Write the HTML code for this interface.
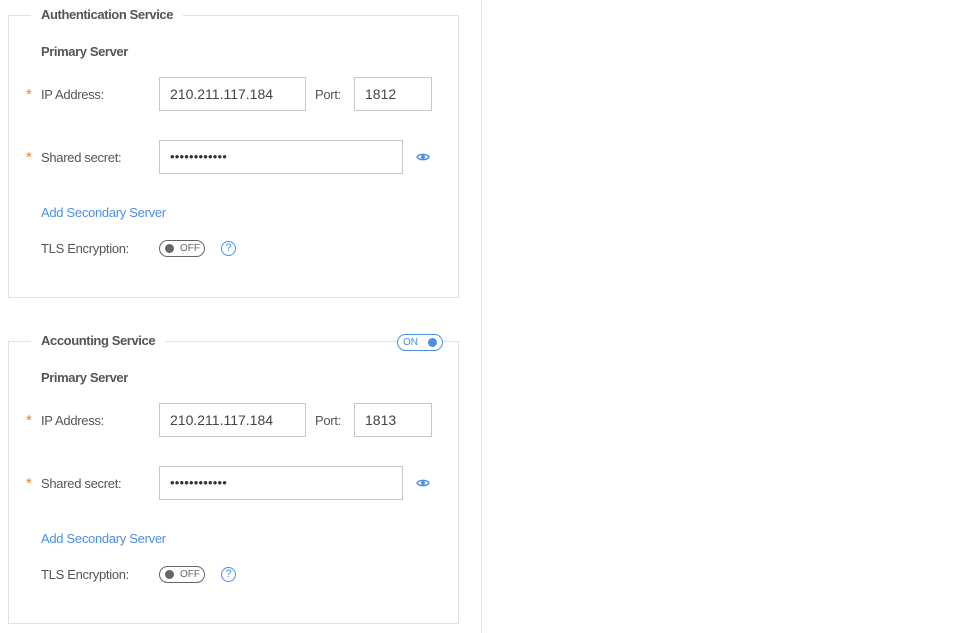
<!DOCTYPE html>
<html><head><meta charset="utf-8"><style>
*{margin:0;padding:0;box-sizing:border-box}
body{width:977px;height:633px;background:#fff;font-family:"Liberation Sans",sans-serif;position:relative;overflow:hidden;color:#555}
.vl{position:absolute;left:481px;top:0;width:1px;height:633px;background:#e4e4e4}
.sec{position:absolute;left:8px;width:451px;height:283px;border:1px solid #e2e2e2}
.t{position:absolute;background:#fff;padding:0 10px;font-size:13px;font-weight:bold;color:#555;left:22px;top:-9px;line-height:16px;letter-spacing:-0.4px}
.a{position:absolute;font-size:13px;line-height:16px;letter-spacing:-0.3px}
.b{font-weight:bold;letter-spacing:-0.4px}
.star{color:#e8822d;left:17px;font-size:15px}
.inp{position:absolute;border:1px solid #c8c8c8;height:34px;font-size:14px;color:#444;padding-left:10px;line-height:32px;background:#fff}
.pw{font-size:13px;letter-spacing:0.2px;color:#333}
.link{color:#4d8ee6}
.eye{position:absolute}
.tog{position:absolute;width:46px;height:17px;border:1.5px solid #666;border-radius:9px;font-size:10px;color:#666}
.tog i{position:absolute;left:5px;top:3px;width:9px;height:9px;border-radius:50%;background:#666}
.tog span{position:absolute;left:20px;top:1px;line-height:13px}
.q{position:absolute;width:15px;height:15px;border:1.5px solid #4d8ee6;border-radius:50%;color:#4d8ee6;font-size:11px;text-align:center;line-height:12px}
.on{position:absolute;left:388px;top:-8px;width:46px;height:17px;border:1.5px solid #4d8ee6;border-radius:9px;background:#fff;font-size:10px;color:#4d8ee6}
.on span{position:absolute;left:5px;top:1px;line-height:13px}
.on i{position:absolute;right:5px;top:3px;width:9px;height:9px;border-radius:50%;background:#4d8ee6}
</style></head><body>
<div class="vl"></div>

<div class="sec" style="top:15px">
<div class="t">Authentication Service</div>
<div class="a b" style="left:32px;top:28px">Primary Server</div>
<div class="a star" style="top:71px">*</div>
<div class="a" style="left:32px;top:71px">IP Address:</div>
<div class="inp" style="left:150px;top:61px;width:147px">210.211.117.184</div>
<div class="a" style="left:306px;top:71px">Port:</div>
<div class="inp" style="left:345px;top:61px;width:78px">1812</div>
<div class="a star" style="top:134px">*</div>
<div class="a" style="left:32px;top:134px">Shared secret:</div>
<div class="inp pw" style="left:150px;top:124px;width:244px">••••••••••••</div>
<svg class="eye" style="left:407px;top:136px" width="14" height="10" viewBox="0 0 14 10"><path d="M1 5C3 1.5 11 1.5 13 5C11 8.5 3 8.5 1 5Z" fill="none" stroke="#4d8ee6" stroke-width="1.5"/><circle cx="7" cy="5" r="2" fill="#4d8ee6"/></svg>
<div class="a link" style="left:32px;top:189px">Add Secondary Server</div>
<div class="a" style="left:32px;top:225px">TLS Encryption:</div>
<div class="tog" style="left:150px;top:224px"><i></i><span>OFF</span></div>
<div class="q" style="left:212px;top:225px">?</div>
</div>

<div class="sec" style="top:341px">
<div class="t">Accounting Service</div>
<div class="on"><span>ON</span><i></i></div>
<div class="a b" style="left:32px;top:28px">Primary Server</div>
<div class="a star" style="top:71px">*</div>
<div class="a" style="left:32px;top:71px">IP Address:</div>
<div class="inp" style="left:150px;top:61px;width:147px">210.211.117.184</div>
<div class="a" style="left:306px;top:71px">Port:</div>
<div class="inp" style="left:345px;top:61px;width:78px">1813</div>
<div class="a star" style="top:134px">*</div>
<div class="a" style="left:32px;top:134px">Shared secret:</div>
<div class="inp pw" style="left:150px;top:124px;width:244px">••••••••••••</div>
<svg class="eye" style="left:407px;top:136px" width="14" height="10" viewBox="0 0 14 10"><path d="M1 5C3 1.5 11 1.5 13 5C11 8.5 3 8.5 1 5Z" fill="none" stroke="#4d8ee6" stroke-width="1.5"/><circle cx="7" cy="5" r="2" fill="#4d8ee6"/></svg>
<div class="a link" style="left:32px;top:189px">Add Secondary Server</div>
<div class="a" style="left:32px;top:225px">TLS Encryption:</div>
<div class="tog" style="left:150px;top:224px"><i></i><span>OFF</span></div>
<div class="q" style="left:212px;top:225px">?</div>
</div>
</body></html>
